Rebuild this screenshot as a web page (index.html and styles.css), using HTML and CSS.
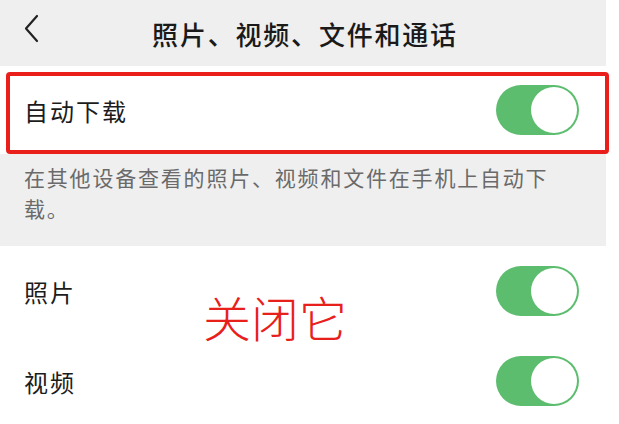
FILE: index.html
```html
<!DOCTYPE html>
<html lang="zh-CN">
<head>
  <meta charset="UTF-8" />
  <meta name="viewport" content="width=device-width, initial-scale=1.0" />
  <title>照片、视频、文件和通话</title>
  <link rel="stylesheet" href="styles.css">
</head>
<body>
  <div class="screen">
    <div class="header">
      <svg class="back" width="16" height="29" viewBox="0 0 16 29">
        <path d="M14 2 L3 14.5 L14 27" fill="none" stroke="#222" stroke-width="2.2" stroke-linecap="round" stroke-linejoin="round"/>
      </svg>
      <div class="title">照片、视频、文件和通话</div>
    </div>

    <div class="row row-top">
      <span class="label">自动下载</span>
      <span class="switch"><span class="knob"></span></span>
    </div>

    <div class="desc">在其他设备查看的照片、视频和文件在手机上自动下载。</div>

    <div class="row">
      <span class="label">照片</span>
      <span class="switch"><span class="knob"></span></span>
    </div>
    <div class="row">
      <span class="label">视频</span>
      <span class="switch"><span class="knob"></span></span>
    </div>
  </div>

  <!-- annotation layer -->
  <div class="mark-box"></div>
  <div class="mark-text">关闭它</div>
</body>
</html>
```

FILE: styles.css
```css
body {
  margin: 0;
  background: #fff;
  font-family: "Noto Sans CJK SC", "Noto Sans", sans-serif;
  color: #1c1c1c;
}

.screen {
  width: 606px;
}

.header {
  position: relative;
  height: 66px;
  background: #efefef;
  display: flex;
  align-items: center;
  justify-content: center;
}

.header .back {
  position: absolute;
  left: 23px;
  top: 14px;
}

.title {
  font-size: 26px;
  font-weight: 500;
  letter-spacing: 1.8px;
  margin-left: 4px;
  color: #1a1a1a;
}

.row {
  height: 90px;
  display: flex;
  align-items: center;
  justify-content: space-between;
  padding: 0 27px 0 24px;
  background: #fff;
}

.row-top {
  height: 88px;
}

.label {
  font-size: 24px;
  letter-spacing: 2px;
}

.switch {
  width: 83px;
  height: 50px;
  border-radius: 25px;
  background: #5cbd6e;
  display: flex;
  align-items: center;
  justify-content: flex-end;
  padding: 2px;
  box-sizing: border-box;
}

.knob {
  width: 46px;
  height: 46px;
  border-radius: 50%;
  background: #fff;
}

.desc {
  height: 92px;
  box-sizing: border-box;
  background: #efefef;
  padding: 8px 50px 0 24px;
  font-size: 21px;
  line-height: 31px;
  letter-spacing: 1.8px;
  color: #6a6a6a;
}

.mark-box {
  position: absolute;
  left: 6px;
  top: 72px;
  width: 603px;
  height: 82px;
  box-sizing: border-box;
  border: 4px solid #ea1f1c;
  border-radius: 4px;
}

.mark-text {
  position: absolute;
  left: 203px;
  top: 281px;
  font-size: 48px;
  font-weight: 300;
  color: #e8201c;
}
```
